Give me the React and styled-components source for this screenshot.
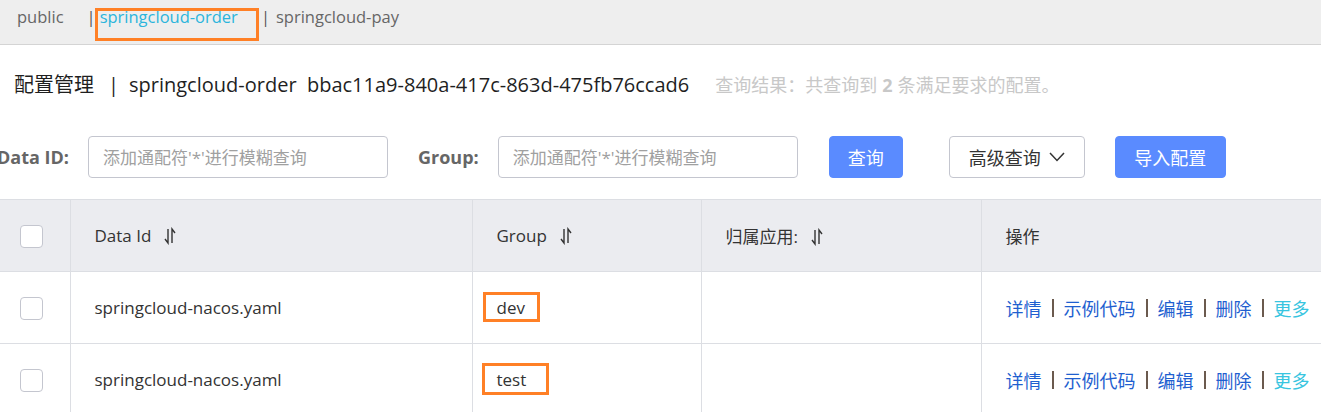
import React from "react";
import styled, { createGlobalStyle } from "styled-components";

const Global = createGlobalStyle`
  html, body { margin: 0; padding: 0; background: #fff; overflow: hidden; }
  body { font-family: "Open Sans", "Noto Sans CJK SC", sans-serif; color: #333; }
  *, *::before, *::after { box-sizing: border-box; }
`;

const Page = styled.div`
  width: 1321px;
  height: 412px;
  overflow: hidden;
`;

const TabBar = styled.div`
  height: 45px;
  background: #eeeeee;
  border-bottom: 1px solid #d4d4d4;
  display: flex;
  align-items: flex-start;
  padding: 5px 0 0 17px;
  font-size: 16.5px;
  line-height: 24px;
`;

const Tab = styled.span`
  color: ${(p) => (p.$active ? "#2bb5dc" : "#666")};
`;

const TabSep = styled.span`
  color: #555;
  margin: 0 ${(p) => p.$right}px 0 ${(p) => p.$left}px;
`;

const Mark = styled.span`
  position: relative;
  &::after {
    content: "";
    position: absolute;
    left: ${(p) => p.$l}px;
    top: ${(p) => p.$t}px;
    width: ${(p) => p.$w}px;
    height: ${(p) => p.$h}px;
    border: 3px solid #ff8026;
    pointer-events: none;
  }
`;

const TitleRow = styled.div`
  display: flex;
  align-items: baseline;
  padding: 26px 0 0 14px;
  height: 54px;
`;

const Title = styled.h1`
  margin: 0;
  font-weight: 400;
  font-size: 20px;
  line-height: 28px;
  color: #1f1f1f;
  white-space: nowrap;
`;

const TitleSep = styled.span`
  margin: 0 10px 0 14px;
`;

const Result = styled.span`
  margin-left: 26px;
  font-size: 18px;
  color: #c8c8c8;
  white-space: nowrap;
  b { font-weight: 700; margin: 0 5px; }
`;

const FilterRow = styled.div`
  display: flex;
  align-items: center;
  margin-top: 37px;
  height: 42px;
`;

const Label = styled.label`
  font-size: 18px;
  font-weight: 700;
  color: #666;
  margin-left: ${(p) => p.$ml}px;
  margin-right: ${(p) => p.$mr}px;
  white-space: nowrap;
`;

const Input = styled.input`
  width: 300px;
  height: 42px;
  border: 1px solid #c4c6cf;
  border-radius: 4px;
  padding: 0 14px;
  font-size: 17px;
  font-family: inherit;
  color: #333;
  outline: none;
  &::placeholder { color: #a0a0a0; }
`;

const Button = styled.button`
  height: 42px;
  width: ${(p) => p.$w}px;
  margin-left: ${(p) => p.$ml}px;
  border-radius: 4px;
  font-family: inherit;
  font-size: 18px;
  border: 1px solid ${(p) => (p.$primary ? "#5a8bff" : "#c4c6cf")};
  background: ${(p) => (p.$primary ? "#5a8bff" : "#fff")};
  color: ${(p) => (p.$primary ? "#fff" : "#333")};
  display: flex;
  align-items: center;
  justify-content: center;
  gap: 8px;
  padding: 0;
`;

const Table = styled.table`
  margin-top: 21px;
  width: 1330px;
  border-collapse: collapse;
  table-layout: fixed;
  font-size: 17px;
`;

const Th = styled.th`
  height: 72px;
  background: #ebecf0;
  border: 1px solid #dcdee3;
  border-left: ${(p) => (p.$first ? "none" : "1px solid #dcdee3")};
  text-align: left;
  font-weight: 400;
  color: #333;
  padding: 0 0 0 ${(p) => p.$pl ?? 24}px;
  white-space: nowrap;
`;

const Td = styled.td`
  height: 72px;
  border: 1px solid #dcdee3;
  border-left: ${(p) => (p.$first ? "none" : "1px solid #dcdee3")};
  padding: 0 0 0 ${(p) => p.$pl ?? 24}px;
  color: #333;
  white-space: nowrap;
`;

const Checkbox = styled.span`
  display: inline-block;
  width: 23px;
  height: 23px;
  border: 1px solid #c4c6cf;
  border-radius: 4px;
  background: #fff;
  vertical-align: middle;
`;

const SortIcon = () => (
  <svg width="14" height="18" viewBox="0 0 14 18" style={{ marginLeft: 12, verticalAlign: "-3px" }}>
    <path d="M5 2 V16 L2 12" fill="none" stroke="#333" strokeWidth="1.4" />
    <path d="M9 16 V2 L12 6" fill="none" stroke="#333" strokeWidth="1.4" />
  </svg>
);

const Chevron = () => (
  <svg width="16" height="10" viewBox="0 0 16 10">
    <path d="M1 1 L8 8.5 L15 1" fill="none" stroke="#333" strokeWidth="1.5" />
  </svg>
);

const Actions = styled.div`
  display: flex;
  align-items: center;
  font-size: 18px;
`;

const Link = styled.a`
  color: ${(p) => (p.$more ? "#38c5e0" : "#1f5fd0")};
  text-decoration: none;
`;

const ActSep = styled.span`
  display: inline-block;
  width: 2px;
  height: 18px;
  background: #6b5a4e;
  margin: 0 10px;
`;

const rows = [
  { id: "springcloud-nacos.yaml", group: "dev", mark: { l: -14, t: -4, w: 57, h: 30 } },
  { id: "springcloud-nacos.yaml", group: "test", mark: { l: -15, t: -5, w: 67, h: 32 } },
];

const actions = ["详情", "示例代码", "编辑", "删除"];

export default function App() {
  return (
    <Page>
      <Global />
      <TabBar>
        <Tab>public</Tab>
        <TabSep $left={23} $right={4}>|</TabSep>
        <Mark $l={-5} $t={3} $w={164} $h={33}>
          <Tab $active>springcloud-order</Tab>
        </Mark>
        <TabSep $left={23} $right={6}>|</TabSep>
        <Tab>springcloud-pay</Tab>
      </TabBar>

      <TitleRow>
        <Title>
          配置管理<TitleSep>|</TitleSep>springcloud-order&nbsp;&nbsp;bbac11a9-840a-417c-863d-475fb76ccad6
        </Title>
        <Result>
          查询结果：共查询到<b>2</b>条满足要求的配置。
        </Result>
      </TitleRow>

      <FilterRow>
        <Label $ml={-3} $mr={19}>Data ID:</Label>
        <Input placeholder="添加通配符'*'进行模糊查询" />
        <Label $ml={30} $mr={19}>Group:</Label>
        <Input placeholder="添加通配符'*'进行模糊查询" />
        <Button $primary $w={74} $ml={31}>查询</Button>
        <Button $w={136} $ml={46}>高级查询 <Chevron /></Button>
        <Button $primary $w={111} $ml={30}>导入配置</Button>
      </FilterRow>

      <Table>
        <colgroup>
          <col style={{ width: 70 }} />
          <col style={{ width: 402 }} />
          <col style={{ width: 229 }} />
          <col style={{ width: 280 }} />
          <col />
        </colgroup>
        <thead>
          <tr>
            <Th $first $pl={20}><Checkbox /></Th>
            <Th>Data Id<SortIcon /></Th>
            <Th>Group<SortIcon /></Th>
            <Th>归属应用:<SortIcon /></Th>
            <Th>操作</Th>
          </tr>
        </thead>
        <tbody>
          {rows.map((r, i) => (
            <tr key={i}>
              <Td $first $pl={20}><Checkbox /></Td>
              <Td>{r.id}</Td>
              <Td>
                <Mark $l={r.mark.l} $t={r.mark.t} $w={r.mark.w} $h={r.mark.h}>{r.group}</Mark>
              </Td>
              <Td />
              <Td>
                <Actions>
                  {actions.map((a) => (
                    <React.Fragment key={a}>
                      <Link href="#">{a}</Link>
                      <ActSep />
                    </React.Fragment>
                  ))}
                  <Link href="#" $more>更多</Link>
                </Actions>
              </Td>
            </tr>
          ))}
        </tbody>
      </Table>
    </Page>
  );
}
